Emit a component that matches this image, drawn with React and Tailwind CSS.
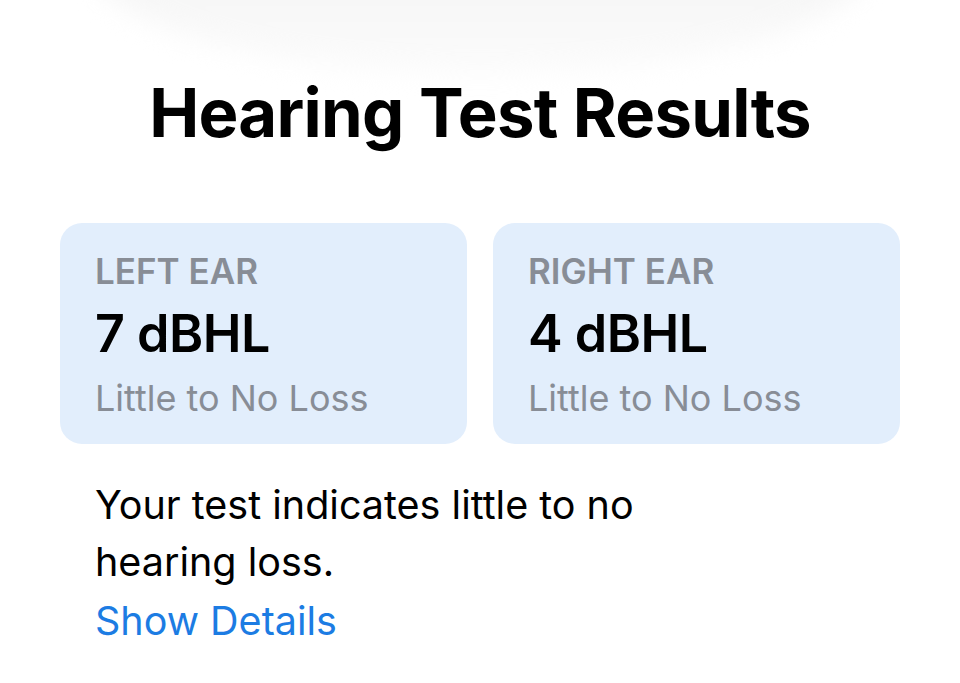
export default function App() {
  const ears = [
    { side: 'LEFT EAR', value: '7 dBHL', note: 'Little to No Loss' },
    { side: 'RIGHT EAR', value: '4 dBHL', note: 'Little to No Loss' },
  ];

  return (
    <div className="relative w-full h-[683px] bg-white overflow-hidden font-['Inter',_'Noto_Sans',_sans-serif]">
      {/* faint sheet shadow at the top */}
      <div className="absolute left-[90px] right-[90px] top-[-150px] h-[225px] rounded-[50%] bg-gradient-to-b from-[#eeeeee] to-[#fcfcfc] blur-md pointer-events-none" />

      <div className="relative flex flex-col px-[60px] pt-[79px]">
        <h1 className="text-center text-[67px] leading-[67px] font-bold tracking-[-0.7px] text-black">
          Hearing Test Results
        </h1>

        <div className="mt-[77px] grid grid-cols-2 gap-[26px]">
          {ears.map((ear) => (
            <div key={ear.side} className="rounded-[22px] bg-[#e2eefc] pl-[35px] pt-[27px] pb-[25px]">
              <div className="text-[35px] leading-[42px] font-semibold text-[#888d96]">{ear.side}</div>
              <div className="mt-[12px] text-[52px] leading-[60px] font-semibold text-black tracking-[-0.5px]">
                {ear.value}
              </div>
              <div className="mt-[13px] text-[36px] leading-[42px] text-[#888d96]">{ear.note}</div>
            </div>
          ))}
        </div>

        <div className="mt-[33px] pl-[35px] w-[640px] text-[39.5px] leading-[56.5px] text-black">
          <p>Your test indicates little to no hearing loss.</p>
          <p className="mt-[3px] text-[#1c7ce3]">Show Details</p>
        </div>
      </div>
    </div>
  );
}
